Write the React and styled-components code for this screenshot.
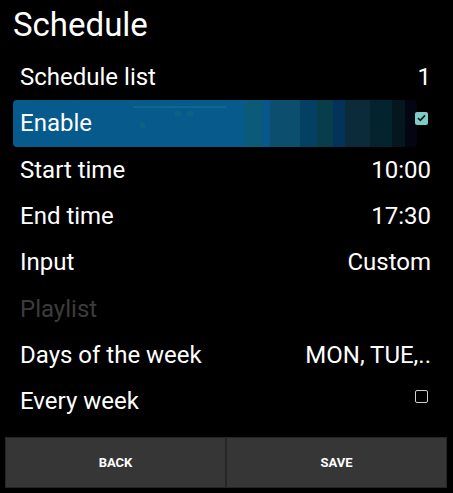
import React from "react";
import styled, { createGlobalStyle, css } from "styled-components";

const Global = createGlobalStyle`
  html, body { margin: 0; padding: 0; background: #000; }
  body { font-family: Roboto, "Noto Sans", "Liberation Sans", sans-serif; }
`;

const Screen = styled.div`
  width: 453px;
  height: 493px;
  background: #000;
  color: #fff;
  display: flex;
  flex-direction: column;
  box-sizing: border-box;
  padding-bottom: 5px;
  overflow: hidden;
`;

const Title = styled.h1`
  margin: 0;
  height: 54px;
  box-sizing: border-box;
  padding: 0 0 5px 13px;
  display: flex;
  align-items: center;
  font-size: 33px;
  font-weight: 400;
  color: #fff;
`;

const List = styled.div`
  display: flex;
  flex-direction: column;
  padding-left: 13px;
  padding-right: 22px;
`;

const highlight = css`
  &::before {
    content: "";
    position: absolute;
    left: 0;
    top: 0;
    width: 404px;
    height: 100%;
    border-radius: 4px;
    z-index: 0;
    background:
      linear-gradient(#0b6a8c, #0b6a8c) 120px 6px / 93px 2px no-repeat,
      linear-gradient(#0c6282, #0c6282) 162px 11px / 6px 5px no-repeat,
      linear-gradient(#0c6282, #0c6282) 174px 11px / 6px 5px no-repeat,
      linear-gradient(#0c6282, #0c6282) 127px 23px / 5px 5px no-repeat,
      linear-gradient(
        to right,
        #065a8c 0%,
        #065a8c 57.4%,
        #0a5a78 57.4%,
        #0a5a78 61.6%,
        #07578a 61.6%,
        #07578a 63.6%,
        #0b4e6e 63.6%,
        #0b4e6e 71%,
        #034064 71%,
        #034064 75.2%,
        #083e4c 75.2%,
        #083e4c 79.2%,
        #03335a 79.2%,
        #03335a 82.2%,
        #0b2b3b 82.2%,
        #0b2b3b 88.4%,
        #03232f 88.4%,
        #03232f 93.8%,
        #04171f 93.8%,
        #04171f 97%,
        #020612 97%,
        #020612 100%
      );
  }
`;

const Row = styled.div`
  position: relative;
  height: 46.3px;
  display: flex;
  align-items: center;
  justify-content: space-between;
  padding-left: 7px;
  font-size: 24px;
  color: ${(p) => (p.$disabled ? "#3c3c3c" : "#fff")};
  ${(p) => p.$selected && highlight}
`;

const Label = styled.span`
  position: relative;
  z-index: 1;
`;

const Value = styled.span`
  position: relative;
  z-index: 1;
`;

const Check = styled.span`
  position: relative;
  z-index: 1;
  width: 13px;
  height: 13px;
  box-sizing: border-box;
  margin-right: 3px;
  margin-bottom: 10px;
  border-radius: 2px;
  display: flex;
  align-items: center;
  justify-content: center;
  ${(p) =>
    p.$checked
      ? css`
          background: #80cbc4;
        `
      : css`
          border: 1.5px solid #d0d0d0;
        `}
`;

const Footer = styled.div`
  margin-top: auto;
  display: flex;
  padding: 0 6px 0 5px;
`;

const Button = styled.button`
  flex: 1;
  height: 51px;
  background: #363636;
  border: 1px solid #262626;
  color: #fff;
  font-family: Roboto, "Noto Sans", "Liberation Sans", sans-serif;
  font-size: 13px;
  font-weight: 700;
  padding: 0;
  margin: 0;
`;

function Checkbox({ checked }) {
  return (
    <Check $checked={checked}>
      {checked && (
        <svg width="9" height="8" viewBox="0 0 9 8">
          <path d="M1 4.2 L3.4 6.4 L8 1.4" fill="none" stroke="#0d1a1a" strokeWidth="1.6" />
        </svg>
      )}
    </Check>
  );
}

const rows = [
  { label: "Schedule list", value: "1" },
  { label: "Enable", check: true, checked: true, selected: true },
  { label: "Start time", value: "10:00" },
  { label: "End time", value: "17:30" },
  { label: "Input", value: "Custom" },
  { label: "Playlist", disabled: true },
  { label: "Days of the week", value: "MON, TUE,.." },
  { label: "Every week", check: true, checked: false },
];

export default function App() {
  return (
    <>
      <Global />
      <Screen>
        <Title>Schedule</Title>
        <List>
          {rows.map((r) => (
            <Row key={r.label} $selected={r.selected} $disabled={r.disabled}>
              <Label>{r.label}</Label>
              {r.check ? <Checkbox checked={r.checked} /> : r.value ? <Value>{r.value}</Value> : null}
            </Row>
          ))}
        </List>
        <Footer>
          <Button>BACK</Button>
          <Button>SAVE</Button>
        </Footer>
      </Screen>
    </>
  );
}
